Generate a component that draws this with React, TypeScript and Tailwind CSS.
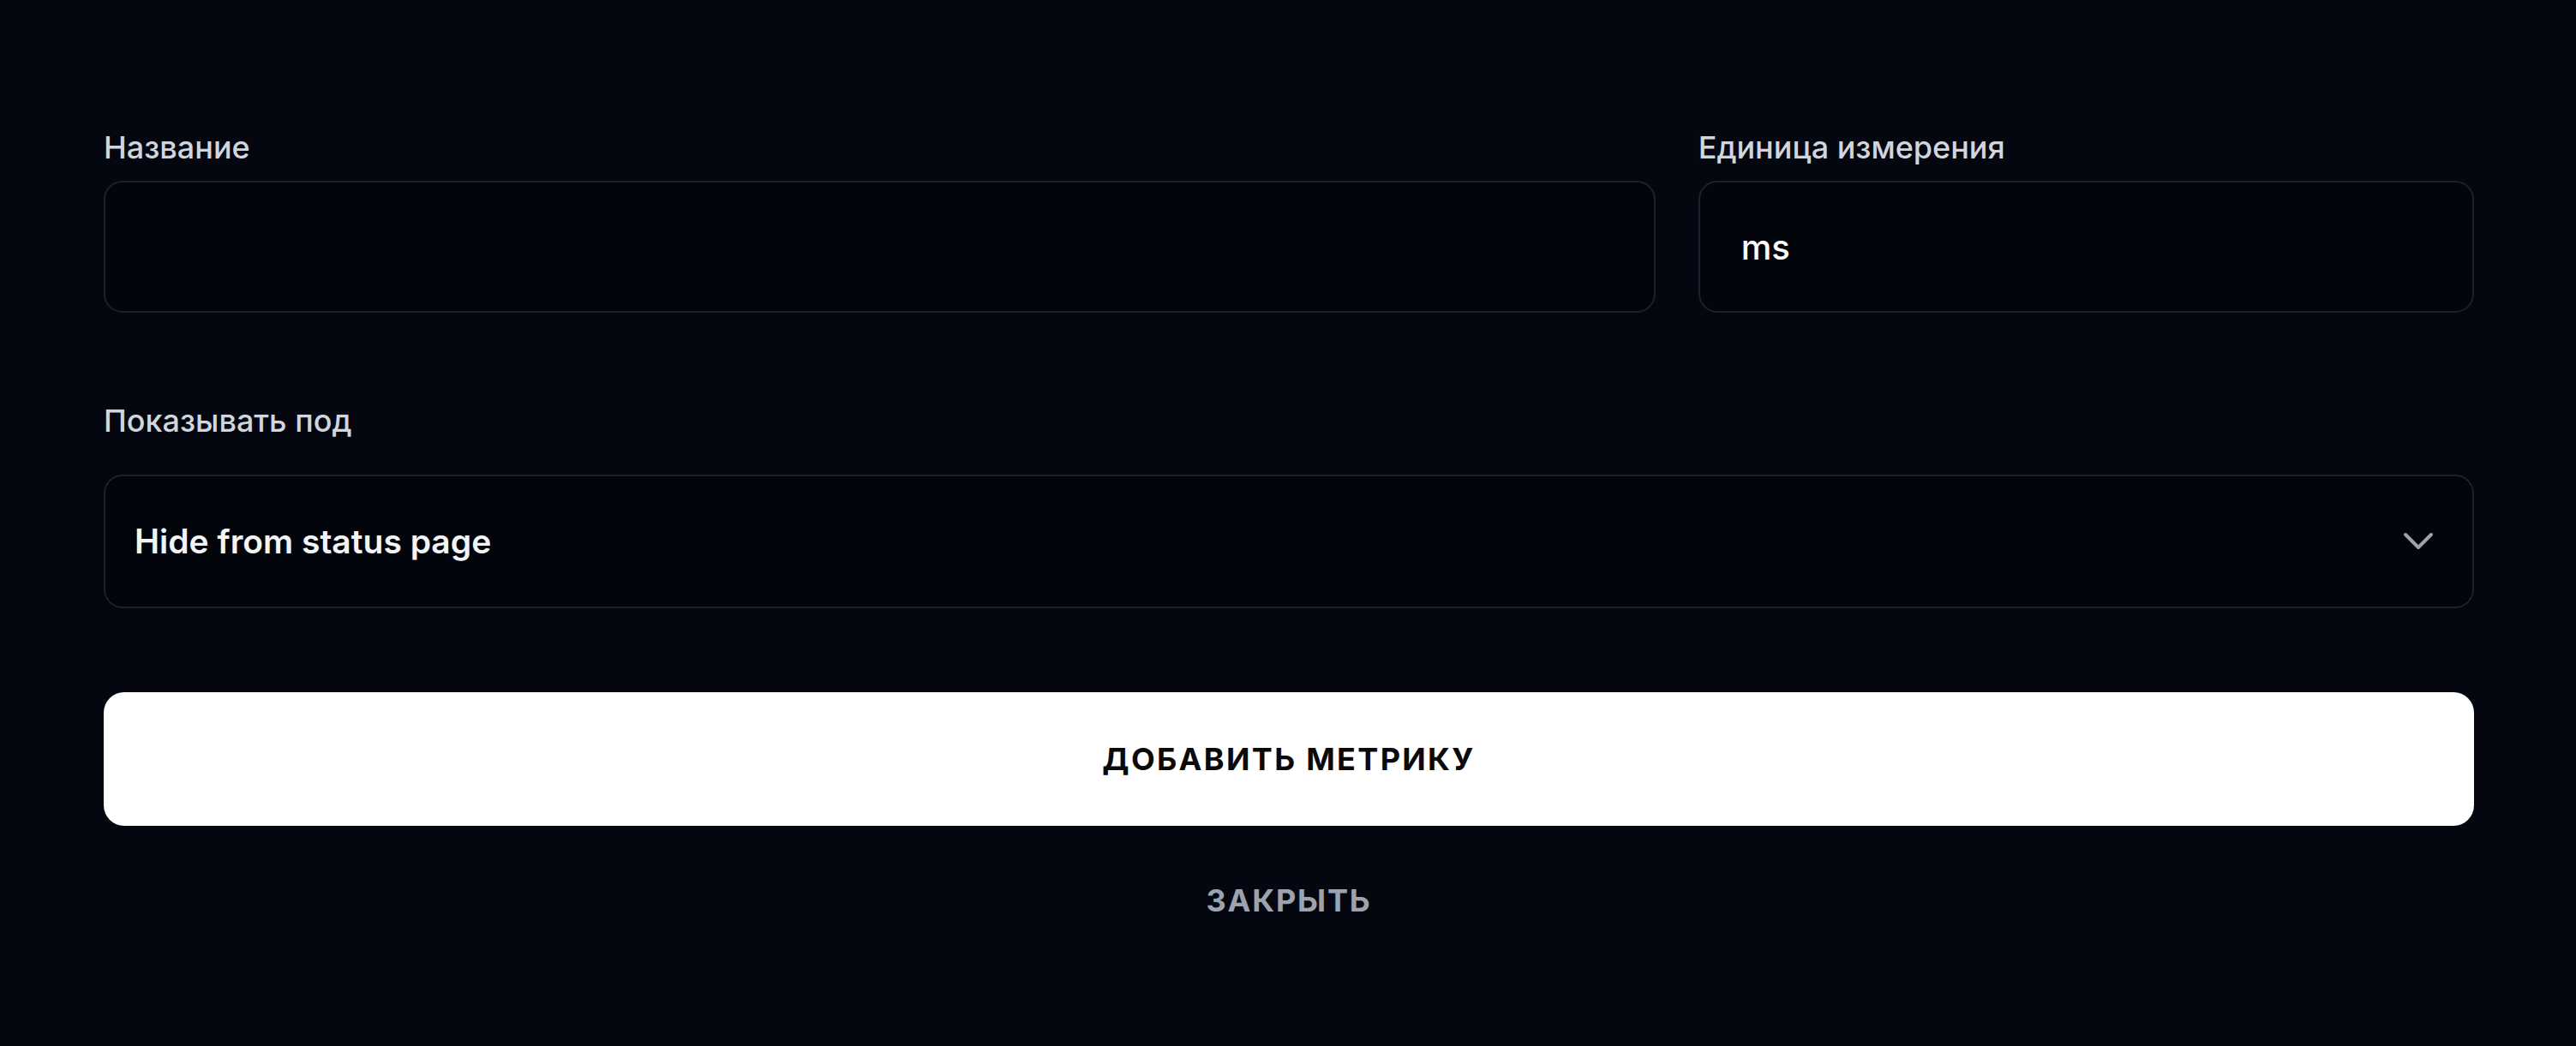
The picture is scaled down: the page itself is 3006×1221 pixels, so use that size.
import { ChangeEvent, useState } from "react"

function ChevronDown() {
  return (
    <svg width="36" height="22" viewBox="0 0 36 22" fill="none" className="shrink-0">
      <path d="M3 3 L18 18 L33 3" stroke="#9ca3af" strokeWidth="4" strokeLinecap="round" strokeLinejoin="round" />
    </svg>
  )
}

export default function App() {
  const [name, setName] = useState("")
  const [unit, setUnit] = useState("ms")

  return (
    <div
      className="min-h-screen bg-[#050710] pl-[121px] pr-[119px] pt-[150px] pb-[100px]"
      style={{ fontFamily: "Inter, 'Noto Sans', sans-serif" }}
    >
      <div className="flex gap-[50px]">
        <div className="flex-[2] min-w-0">
          <label className="block text-[36px] leading-[44px] font-medium text-[#d1d5dc] mb-[17px]">Название</label>
          <input
            value={name}
            onChange={(e: ChangeEvent<HTMLInputElement>) => setName(e.target.value)}
            className="w-full h-[154px] rounded-[22px] border-2 border-[#1c2130] bg-[#03050c] px-12 text-[40px] font-medium text-white outline-none"
          />
        </div>
        <div className="flex-1 min-w-0">
          <label className="block text-[36px] leading-[44px] font-medium text-[#d1d5dc] mb-[17px]">Единица измерения</label>
          <input
            value={unit}
            onChange={(e: ChangeEvent<HTMLInputElement>) => setUnit(e.target.value)}
            className="w-full h-[154px] rounded-[22px] border-2 border-[#1c2130] bg-[#03050c] px-12 text-[40px] font-medium text-white outline-none"
          />
        </div>
      </div>

      <div className="mt-[104px]">
        <label className="block text-[36px] leading-[44px] font-medium text-[#d1d5dc] mb-[41px]">Показывать под</label>
        <div className="flex items-center justify-between h-[156px] rounded-[22px] border-2 border-[#1c2130] bg-[#03050c] pl-[34px] pr-[45px]">
          <span className="text-[39px] font-semibold text-[#f3f4f6]">Hide from status page</span>
          <ChevronDown />
        </div>
      </div>

      <button className="mt-[98px] w-full h-[156px] rounded-[24px] bg-white text-[36px] font-bold tracking-[0.065em] text-[#0a0a0a]">
        ДОБАВИТЬ МЕТРИКУ
      </button>

      <div className="mt-[65px] flex justify-center">
        <button className="text-[36px] leading-[44px] font-bold tracking-[0.05em] text-[#9ca3af]">ЗАКРЫТЬ</button>
      </div>
    </div>
  )
}
